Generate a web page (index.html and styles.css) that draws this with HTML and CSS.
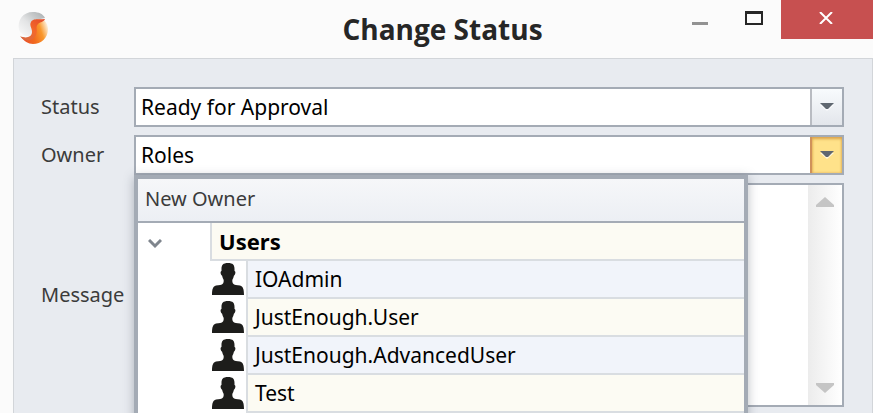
FILE: index.html
```html
<!DOCTYPE html>
<html lang="en">
<head>
<meta charset="utf-8">
<meta name="viewport" content="width=device-width, initial-scale=1">
<title>Change Status</title>
<link rel="stylesheet" href="styles.css">
</head>
<body>
<svg class="sprite" aria-hidden="true">
  <symbol id="person" viewBox="0 0 32 32">
    <path d="M16 0C11 0 9.500 2 9.500 6v2c-1.500 0-1 4 .5 4.500.5 2 1 3 1.500 4 .5 1.500 0 3-.5 4-1 1.500-4 1.500-7 2C1 23.500 0 26 0 32h32c0-6-1-8.500-4-9.500-3-.5-6-.5-7-2-.5-1-1-2.500-.5-4 .5-1 1-2 1.500-4 1.500-.5 2-4.500.5-4.500V6C22.500 2 21 0 16 0z"/>
  </symbol>
  <symbol id="arrow" viewBox="0 0 14 8">
    <path class="arrow-glow" d="M0 2h14L7 8z"/>
    <path d="M0 0h14L8 6H6z"/>
  </symbol>
</svg>
<main class="window">
  <header class="titlebar">
    <svg class="logo" viewBox="0 0 32 32" aria-hidden="true">
      <defs>
        <linearGradient id="silver" x1="1" y1="0" x2="0" y2="1">
          <stop offset="0" stop-color="#a9adaf"/>
          <stop offset=".3" stop-color="#c6c9ca"/>
          <stop offset=".55" stop-color="#e3e4e5"/>
          <stop offset="1" stop-color="#fbfbfb"/>
        </linearGradient>
        <linearGradient id="orange" x1="0" y1=".6" x2="1" y2=".3">
          <stop offset="0" stop-color="#e9502a"/>
          <stop offset=".4" stop-color="#f26a1e"/>
          <stop offset=".72" stop-color="#f9982c"/>
          <stop offset="1" stop-color="#fdf0dd"/>
        </linearGradient>
        <linearGradient id="ember" x1="1" y1="0" x2="0" y2="1">
          <stop offset="0" stop-color="#e2492a"/>
          <stop offset=".5" stop-color="#f4682a"/>
          <stop offset="1" stop-color="#cf6a48"/>
        </linearGradient>
      </defs>
      <path d="M16 0c6 0 10 2 12 6l-9 2c-4 2-4 4-3 8s-1 8-5 8-7-2-9-6C0 8 6 0 16 0z" fill="url(#silver)"/>
      <path d="M27 8c3 3 4 6 4 9 0 9-7 15-15 15-5 0-9-3-12-7 5 2 11 1 12-4 0-4-3-7-1-11 2-3 6-2 12-2z" fill="url(#orange)"/>
      <path d="M28 7c-1 3-5 3-7 5-3 3 0 6-2 11-3 7-12 7-16 1 6 3 12 1 12-4 0-4-3-7-1-10 2-4 8-2 14-3z" fill="url(#ember)"/>
    </svg>
    <h1 class="title">Change Status</h1>
    <div class="window-buttons">
      <button class="win-btn" type="button" aria-label="Minimize"><span class="minimize"></span></button>
      <button class="win-btn" type="button" aria-label="Maximize"><span class="maximize"></span></button>
      <button class="win-btn close" type="button" aria-label="Close">
        <svg class="cross" viewBox="0 0 14 12" aria-hidden="true"><path d="M1 0L13 12M13 0L1 12"/></svg>
      </button>
    </div>
  </header>
  <form class="panel">
    <label class="label" for="status">Status</label>
    <div class="field">
      <select class="value" id="status"><option>Ready for Approval</option></select>
      <span class="drop"><svg class="arrow"><use href="#arrow"/></svg></span>
    </div>

    <label class="label" for="owner">Owner</label>
    <div class="field">
      <input class="value" id="owner" type="text" value="Roles" role="combobox" aria-expanded="true" aria-controls="owner-list">
      <button class="drop drop-open" type="button" aria-label="Choose owner"><svg class="arrow"><use href="#arrow"/></svg></button>
      <div class="popup" id="owner-list">
        <table class="owners">
          <colgroup><col class="col-toggle"><col class="col-icon"><col></colgroup>
          <thead>
            <tr><th colspan="3">New Owner</th></tr>
          </thead>
          <tbody>
            <tr>
              <td class="blank"><button class="toggle" type="button" aria-label="Collapse Users"><svg class="chevron" viewBox="0 0 14 10" aria-hidden="true"><path d="M1 1l6 6 6-6"/></svg></button></td>
              <td class="group" colspan="2">Users</td>
            </tr>
            <tr class="even"><td class="blank"></td><td class="blank"><svg class="person"><use href="#person"/></svg></td><td class="name">IOAdmin</td></tr>
            <tr><td class="blank"></td><td class="blank"><svg class="person"><use href="#person"/></svg></td><td class="name">JustEnough.User</td></tr>
            <tr class="even"><td class="blank"></td><td class="blank"><svg class="person"><use href="#person"/></svg></td><td class="name">JustEnough.AdvancedUser</td></tr>
            <tr><td class="blank"></td><td class="blank"><svg class="person"><use href="#person"/></svg></td><td class="name">Test</td></tr>
          </tbody>
        </table>
      </div>
    </div>

    <label class="label" for="message">Message</label>
    <div class="field field-message">
      <textarea class="value message" id="message"></textarea>
      <div class="scrollbar" aria-hidden="true">
        <svg class="scroll-arrow" viewBox="0 0 18 10"><path d="M9 0L18 8v2H0V8z"/></svg>
        <svg class="scroll-arrow" viewBox="0 0 18 10"><path d="M0 0h18v2L9 10 0 2z"/></svg>
      </div>
    </div>
  </form>
</main>
</body>
</html>
```
FILE: styles.css
```css
* { box-sizing: border-box; }

body {
  margin: 0;
  background: #fbfbfb;
  color: #000;
  font: 21px/28px "Noto Sans", "Open Sans", sans-serif;
}

button, input, select, textarea {
  margin: 0;
  padding: 0;
  border: 0;
  border-radius: 0;
  outline: 0;
  background: none;
  color: inherit;
  font: inherit;
}

.sprite { position: absolute; width: 0; height: 0; }

.window {
  display: flex;
  flex-direction: column;
  height: 100vh;
  overflow: hidden;
}

.titlebar {
  display: grid;
  grid-template-columns: 1fr auto 1fr;
  flex: none;
  height: 58px;
  padding-left: 17px;
}

.logo { width: 32px; height: 32px; margin-top: 12px; }

.title {
  margin: 9px 5px 0 0;
  color: #262626;
  font: bold 28px/40px "Open Sans", "Noto Sans", sans-serif;
}

.window-buttons { display: flex; justify-content: flex-end; }

.win-btn {
  display: flex;
  justify-content: center;
  width: 54px;
  height: 39px;
}

.close { width: 92px; background: #c75050; }
.minimize { width: 16px; height: 3px; margin-top: 22px; background: #929292; }
.maximize { width: 18px; height: 14px; margin-top: 11px; border: 2px solid #262626; border-top-width: 3px; }
.cross { width: 14px; height: 12px; margin-top: 12px; margin-right: 2px; fill: none; stroke: #fff; stroke-width: 2; }

.panel {
  display: grid;
  grid-template-columns: 93px 1fr;
  grid-template-rows: 40px 40px 224px;
  row-gap: 8px;
  flex: 1 0 auto;
  margin-left: 13px;
  padding: 28px 28px 28px 27px;
  border: 1px solid #d2d5d9;
  background: #e8ebf0;
}

.label { align-self: center; color: #3b3b3b; font-size: 20px; }

.field {
  position: relative;
  display: flex;
  border: 2px solid #a4abb5;
  background: #fff;
}

.value {
  flex: 1;
  min-width: 0;
  padding-left: 5px;
  appearance: none;
}

.message { resize: none; }

.drop {
  display: flex;
  align-items: center;
  justify-content: center;
  width: 32px;
  border-left: 2px solid #b9bcc2;
  background: linear-gradient(#f8fbfd, #e3e6eb);
}

.drop-open {
  border-left-color: #d0925a;
  background: #ffe28a;
  box-shadow: inset 0 2px 3px #dba44d, inset 0 0 3px #e6b45c;
}

.arrow { width: 14px; height: 8px; fill: #5f6770; }
.arrow-glow { fill: #fff; fill-opacity: .7; }

.scrollbar {
  display: flex;
  flex-direction: column;
  align-items: center;
  justify-content: space-between;
  width: 34px;
  padding: 12px 0;
  background: linear-gradient(to right, #ececec, #fff);
}

.scroll-arrow { width: 18px; height: 10px; fill: #c5c5c5; }

.popup {
  position: absolute;
  z-index: 1;
  top: 38px;
  right: 94px;
  left: -2px;
  padding-bottom: 24px;
  border: 4px solid #a4abb5;
  background: #fff;
  box-shadow: 0 2px 10px rgba(60, 70, 85, .35);
}

.owners {
  width: 100%;
  border-spacing: 0;
  table-layout: fixed;
}

.col-toggle { width: 72px; }
.col-icon { width: 36px; }

.owners th {
  height: 44px;
  padding: 0 7px 2px;
  border-bottom: 2px solid #a4abb5;
  background: linear-gradient(#f6f7f9, #eceff4);
  color: #3b3b3b;
  font-size: 20px;
  font-weight: normal;
  text-align: left;
}

.owners td {
  height: 38px;
  padding: 0 7px;
  border-bottom: 2px solid #d9dde1;
  border-left: 2px solid #d9dde1;
  background: #fcfbf3;
}

.owners .even td { background: #f1f4fa; }

.owners td.blank,
.owners .even td.blank {
  padding: 0 0 2px 2px;
  border: 0;
  background: #fff;
}

.owners .group { font-size: 22px; font-weight: bold; }

.toggle { display: block; padding: 6px 8px 0; }
.chevron { display: block; width: 14px; height: 10px; fill: none; stroke: #7f858d; stroke-width: 3; }
.person { display: block; width: 32px; height: 32px; fill: #1d1d1b; }
```
